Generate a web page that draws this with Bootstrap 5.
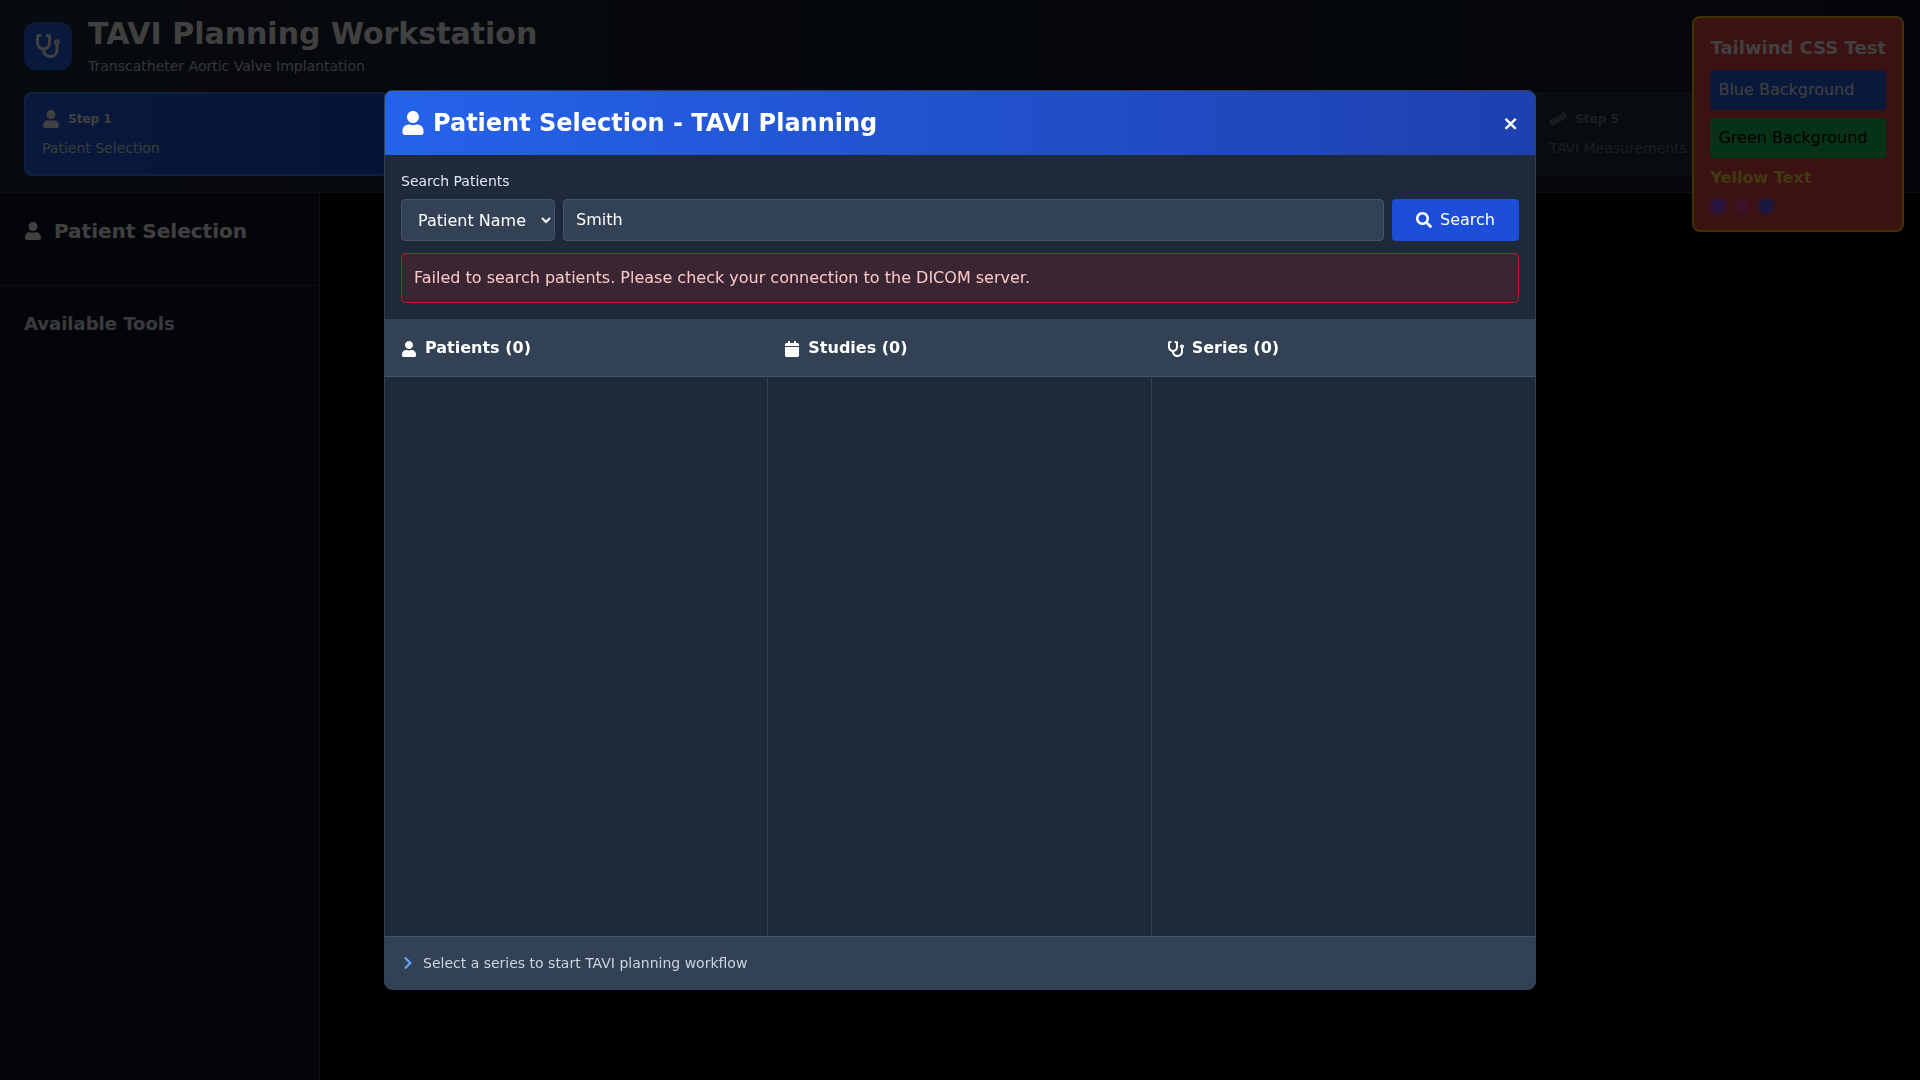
<!DOCTYPE html>
<html lang="en" data-bs-theme="dark">
<head>
<meta charset="utf-8">
<meta name="viewport" content="width=device-width, initial-scale=1">
<title>TAVI Planning Workstation</title>
<link href="https://cdn.jsdelivr.net/npm/bootstrap@5.3.0/dist/css/bootstrap.min.css" rel="stylesheet">
<style>
  body { font-family: "DejaVu Sans", sans-serif; font-size: 16px; line-height: 24px; background: #000; color: #fff; overflow: hidden; }
  h1, h2, h3, h4, p { margin: 0; }
  .ico { width: 1em; height: 1em; fill: currentColor; flex: none; display: block; }
  .t12 { font-size: 12px; line-height: 16px; }
  .t14 { font-size: 14px; line-height: 20px; }
  .t18 { font-size: 18px; line-height: 28px; }
  .t20 { font-size: 20px; line-height: 28px; }
  .t24 { font-size: 24px; line-height: 32px; }
  .t30 { font-size: 30px; line-height: 36px; }

  .app-header { background: linear-gradient(to right, #1e293b, #0f172a); border-bottom: 1px solid #334155; padding: 16px 24px; }
  .logo-box { width: 48px; height: 48px; border-radius: 12px; background: #2563eb; }
  .subtitle { color: #cbd5e1; margin-top: 4px; }
  .steps { display: grid; grid-template-columns: repeat(5, 1fr); gap: 12px; }
  .step-item { height: 84px; padding: 16px; border: 2px solid #475569; border-radius: 8px; background: #334155; color: #cbd5e1; opacity: .5; }
  .step-item.current { background: linear-gradient(to right, #2563eb, #1d4ed8); border-color: #3b82f6; color: #fff; opacity: 1; }
  .step-item.current .step-name { color: #e2e8f0; }
  .step-head { height: 18px; margin-bottom: 10px; }
  .sidebar { width: 320px; background: #0f172a; border-right: 1px solid #334155; }
  .sidebar-top { height: 93px; padding: 24px; border-bottom: 1px solid #334155; }
  .tools-title { color: #e2e8f0; }

  .test-box { top: 16px; right: 16px; padding: 16px; border: 2px solid #facc15; border-radius: 8px; background: #ef4444; }
  .swatch { padding: 8px; border-radius: 4px; }
  .sw-blue { background: #2563eb; }
  .sw-green { background: #22c55e; color: #000; }
  .yellow-text { color: #fde047; }
  .dot { width: 16px; height: 16px; border-radius: 50%; }

  .overlay { background: rgba(0,0,0,.75); z-index: 50; }
  .dialog-box { width: 1152px; height: 900px; background: #1e293b; border: 1px solid #334155; border-radius: 8px; overflow: hidden; }
  .dialog-head { background: linear-gradient(to right, #2563eb, #1e40af); }
  .dialog-close { background: none; border: 0; padding: 0; color: #fff; }
  .search-area { border-bottom: 1px solid #334155; }
  .search-label { color: #e2e8f0; }
  .field { height: 42px; padding: 8px 12px; background: #334155; border: 1px solid #475569; border-radius: 4px; color: #fff; font: inherit; line-height: 24px; outline: 0; }
  input.field { padding: 7px 12px 9px; }
  .btn-search { height: 42px; padding: 8px 24px; border: 0; border-radius: 4px; background: #1d4ed8; color: #fff; }
  .error-box { margin-top: 12px; padding: 12px; background: rgba(127,29,29,.3); border: 1px solid #b91c1c; border-radius: 4px; color: #fecaca; }
  .pane { width: 33.3333%; border-right: 1px solid #334155; }
  .pane:last-child { border-right: 0; }
  .pane-head { background: #334155; border-bottom: 1px solid #475569; padding: 16px; }
  .pane-head .ico { margin-top: 2px; }
  .dialog-foot { background: #334155; border-top: 1px solid #475569; color: #cbd5e1; }
  .chev { color: #60a5fa; }
</style>
<script src="https://cdn.jsdelivr.net/npm/bootstrap@5.3.0/dist/js/bootstrap.bundle.min.js"></script>
</head>
<body>
<svg class="d-none">
  <symbol id="user" viewBox="0 0 448 512"><path d="M224 256c70.7 0 128-57.3 128-128S294.7 0 224 0 96 57.3 96 128s57.3 128 128 128zm89.6 32h-16.7c-22.2 10.2-46.9 16-72.9 16s-50.6-5.8-72.9-16h-16.7C60.2 288 0 348.2 0 422.4V464c0 26.5 21.5 48 48 48h352c26.5 0 48-21.5 48-48v-41.6c0-74.2-60.2-134.4-134.4-134.4z"/></symbol>
  <symbol id="steth" viewBox="0 0 512 512"><path d="M447.1 112c-34.2.5-62.3 28.4-63 62.6-.5 24.3 12.5 45.6 32 56.8V344c0 57.3-50.2 104-112 104-60 0-109.2-44.1-111.9-99.2C265 333.8 320 269.2 320 192V36.6c0-11.4-8.1-21.3-19.3-23.5L237.8.5c-13-2.6-25.6 5.8-28.2 18.8L206.4 35c-2.6 13 5.8 25.6 18.8 28.2l30.7 6.1v121.4c0 52.9-42.2 96.7-95.1 97.2-53.4.5-96.9-42.7-96.9-96V69.4l30.7-6.1c13-2.6 21.4-15.2 18.8-28.2l-3.1-15.7C107.7 6.4 95.1-2 82.1.6L19.3 13C8.1 15.3 0 25.1 0 36.6V192c0 77.3 55.1 142 128.1 156.8C130.7 439.2 208.6 512 304 512c97 0 176-75.4 176-168V231.4c19.1-11.1 32-31.7 32-55.4 0-35.7-29.2-64.5-64.9-64zm.9 80c-8.8 0-16-7.2-16-16s7.2-16 16-16 16 7.2 16 16-7.2 16-16 16z"/></symbol>
  <symbol id="cal" viewBox="0 0 448 512"><path d="M12 192h424c6.6 0 12 5.4 12 12v260c0 26.5-21.5 48-48 48H48c-26.5 0-48-21.5-48-48V204c0-6.6 5.4-12 12-12zm436-44v-36c0-26.5-21.5-48-48-48h-48V12c0-6.6-5.4-12-12-12h-40c-6.6 0-12 5.4-12 12v52H160V12c0-6.6-5.4-12-12-12h-40c-6.6 0-12 5.4-12 12v52H48C21.5 64 0 85.5 0 112v36c0 6.6 5.4 12 12 12h424c6.6 0 12-5.4 12-12z"/></symbol>
  <symbol id="search" viewBox="0 0 512 512"><path d="M505 442.7L405.3 343c-4.5-4.5-10.6-7-17-7H372c27.6-35.3 44-79.7 44-128C416 93.1 322.9 0 208 0S0 93.1 0 208s93.1 208 208 208c48.3 0 92.7-16.4 128-44v16.3c0 6.4 2.5 12.5 7 17l99.7 99.7c9.4 9.4 24.6 9.4 33.9 0l28.3-28.3c9.4-9.4 9.4-24.6.1-34zM208 336c-70.7 0-128-57.2-128-128 0-70.7 57.2-128 128-128 70.7 0 128 57.2 128 128 0 70.7-57.2 128-128 128z"/></symbol>
  <symbol id="chevron" viewBox="0 0 320 512"><path d="M285.476 272.971L91.132 467.314c-9.373 9.373-24.569 9.373-33.941 0l-22.667-22.667c-9.357-9.357-9.375-24.522-.04-33.901L188.505 256 34.484 101.255c-9.335-9.379-9.317-24.544.04-33.901l22.667-22.667c9.373-9.373 24.569-9.373 33.941 0L285.475 239.03c9.373 9.372 9.373 24.568.001 33.941z"/></symbol>
  <symbol id="ruler" viewBox="0 0 640 512"><path d="M635.7 167.2L556.1 31.7c-8.8-15-28.3-20.1-43.5-11.5l-69 39.1L503.3 161c2.2 3.8.9 8.5-2.9 10.7l-13.8 7.8c-3.8 2.2-8.7.9-10.9-2.9L416 75l-55.2 31.3 27.9 47.4c2.2 3.8.9 8.5-2.9 10.7l-13.8 7.8c-3.8 2.2-8.7.9-10.9-2.9L333.2 122 278 153.3 337.8 255c2.2 3.7.9 8.5-2.9 10.7l-13.8 7.8c-3.8 2.2-8.7.9-10.9-2.9l-59.7-101.7-55.2 31.3 27.9 47.4c2.2 3.8.9 8.5-2.9 10.7l-13.8 7.8c-3.8 2.2-8.7.9-10.9-2.9l-27.9-47.5-55.2 31.3 59.7 101.7c2.2 3.7.9 8.5-2.9 10.7l-13.8 7.8c-3.8 2.2-8.7.9-10.9-2.9L84.9 262.9l-69 39.1C.7 310.7-4.6 329.8 4.2 344.8l79.6 135.6c8.8 15 28.3 20.1 43.5 11.5L624.1 210c15.2-8.6 20.4-27.8 11.6-42.8z"/></symbol>
</svg>

<div class="vh-100 d-flex flex-column">
  <header class="app-header">
    <div class="d-flex align-items-center gap-3 mb-3">
      <div class="logo-box d-flex align-items-center justify-content-center"><svg class="ico t24"><use href="#steth"/></svg></div>
      <div>
        <h1 class="t30 fw-bold">TAVI Planning Workstation</h1>
        <p class="t14 subtitle">Transcatheter Aortic Valve Implantation</p>
      </div>
    </div>
    <div class="steps">
      <div class="step-item current">
        <div class="step-head d-flex align-items-center gap-2"><svg class="ico t18"><use href="#user"/></svg><span class="t12 fw-bold">Step 1</span></div>
        <div class="t14 step-name">Patient Selection</div>
      </div>
      <div class="step-item"></div>
      <div class="step-item"></div>
      <div class="step-item"></div>
      <div class="step-item">
        <div class="step-head d-flex align-items-center gap-2"><svg class="ico t18"><use href="#ruler"/></svg><span class="t12 fw-bold">Step 5</span></div>
        <div class="t14 step-name">TAVI Measurements</div>
      </div>
    </div>
  </header>
  <aside class="sidebar flex-grow-1">
    <div class="sidebar-top">
      <h2 class="t20 fw-bold d-flex align-items-center"><svg class="ico t18 me-1"><use href="#user"/></svg><span class="ms-2">Patient Selection</span></h2>
    </div>
    <div class="p-4"><h3 class="t18 fw-bold tools-title">Available Tools</h3></div>
  </aside>
</div>

<div class="test-box position-fixed">
  <h3 class="t18 fw-bold mb-2">Tailwind CSS Test</h3>
  <div class="swatch sw-blue mb-2">Blue Background</div>
  <div class="swatch sw-green mb-2">Green Background</div>
  <p class="yellow-text fw-bold">Yellow Text</p>
  <div class="d-flex gap-2 mt-2">
    <div class="dot" style="background:#a855f7"></div>
    <div class="dot" style="background:#ec4899"></div>
    <div class="dot" style="background:#6366f1"></div>
  </div>
</div>

<div class="overlay position-fixed top-0 start-0 w-100 h-100 d-flex align-items-center justify-content-center">
  <div class="dialog-box d-flex flex-column" role="dialog">
    <div class="dialog-head d-flex align-items-center justify-content-between p-3">
      <h2 class="t24 fw-bold d-flex align-items-center gap-2"><svg class="ico"><use href="#user"/></svg>Patient Selection - TAVI Planning</h2>
      <button class="dialog-close t20 fw-bold" aria-label="Close">×</button>
    </div>
    <div class="search-area p-3">
      <label class="t14 search-label d-block mb-2" for="q">Search Patients</label>
      <div class="d-flex gap-2">
        <select class="field"><option>Patient Name</option><option>Patient ID</option></select>
        <input class="field flex-grow-1" id="q" type="text" value="Smith">
        <button class="btn-search d-flex align-items-center gap-2"><svg class="ico"><use href="#search"/></svg>Search</button>
      </div>
      <div class="error-box">Failed to search patients. Please check your connection to the DICOM server.</div>
    </div>
    <div class="d-flex flex-grow-1">
      <div class="pane"><h3 class="pane-head fs-6 lh-base fw-bold d-flex align-items-center gap-2"><svg class="ico"><use href="#user"/></svg>Patients (0)</h3></div>
      <div class="pane"><h3 class="pane-head fs-6 lh-base fw-bold d-flex align-items-center gap-2"><svg class="ico"><use href="#cal"/></svg>Studies (0)</h3></div>
      <div class="pane"><h3 class="pane-head fs-6 lh-base fw-bold d-flex align-items-center gap-2"><svg class="ico"><use href="#steth"/></svg>Series (0)</h3></div>
    </div>
    <div class="dialog-foot t14 p-3 d-flex align-items-center gap-2"><svg class="ico chev"><use href="#chevron"/></svg>Select a series to start TAVI planning workflow</div>
  </div>
</div>
</body>
</html>
